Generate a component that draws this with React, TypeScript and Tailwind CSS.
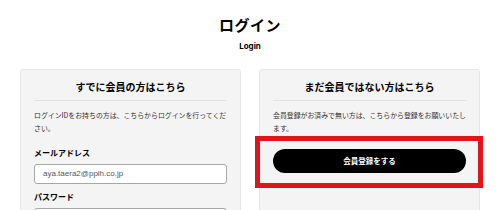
const jp = "font-['Noto_Sans_CJK_JP','Noto_Sans',sans-serif]";

export default function App() {
  return (
    <div className={`w-[500px] h-[210px] overflow-hidden bg-white ${jp}`}>
      {/* PAGE TITLE */}
      <div className="pt-[15px] text-center">
        <h1 className="text-[15px] leading-[20px] font-bold tracking-[0.5px] text-black">ログイン</h1>
        <p className="mt-[5px] text-[8px] leading-[12px] font-bold text-black font-['Inter',sans-serif]">Login</p>
      </div>

      <div className="mt-[17px] flex gap-[18px] px-[20px]">
        {/* MEMBER LOGIN */}
        <section className="w-[222px] h-[200px] rounded-[3px] border border-[#e6e6e6] bg-[#f4f4f4] px-[13px] pt-[9px]">
          <h2 className="border-b border-[#e2e2e2] pb-[5px] text-center text-[10px] leading-[16px] font-bold text-black">
            すでに会員の方はこちら
          </h2>
          <p className="mt-[8px] -mr-[2px] text-[6.9px] leading-[13px] text-[#333] [line-break:anywhere]">
            ログインIDをお持ちの方は、こちらからログインを行ってください。
          </p>
          <label className="mt-[12px] block text-[8px] leading-[12px] font-bold text-black">メールアドレス</label>
          <div className="mt-[5px] flex h-[20px] items-center rounded-[3px] border border-[#a8a8a8] bg-white px-[8px] text-[8px] text-[#555] font-['Liberation_Sans',sans-serif]">
            aya.taera2@ppih.co.jp
          </div>
          <label className="mt-[7px] block text-[8px] leading-[12px] font-bold text-black">パスワード</label>
          <div className="mt-[5px] h-[20px] rounded-[3px] border border-[#a8a8a8] bg-white" />
        </section>

        {/* NEW MEMBER */}
        <section className="w-[222px] h-[200px] rounded-[3px] border border-[#e6e6e6] bg-[#f4f4f4] px-[13px] pt-[9px]">
          <h2 className="border-b border-[#e2e2e2] pb-[5px] text-center text-[10px] leading-[16px] font-bold text-black">
            まだ会員ではない方はこちら
          </h2>
          <p className="mt-[8px] -mr-[2px] text-[6.9px] leading-[13px] text-[#333] [line-break:anywhere]">
            会員登録がお済みで無い方は、こちらから登録をお願いいたします。
          </p>
          <div className="relative mt-[14px]">
            <button className="flex h-[24px] w-full items-center justify-center rounded-full bg-black text-[7.5px] font-bold text-white">
              会員登録をする
            </button>
            <div className="pointer-events-none absolute -left-[18px] -right-[17px] -top-[13px] -bottom-[15px] border-[5px] border-[#e2141b]" />
          </div>
        </section>
      </div>
    </div>
  );
}
